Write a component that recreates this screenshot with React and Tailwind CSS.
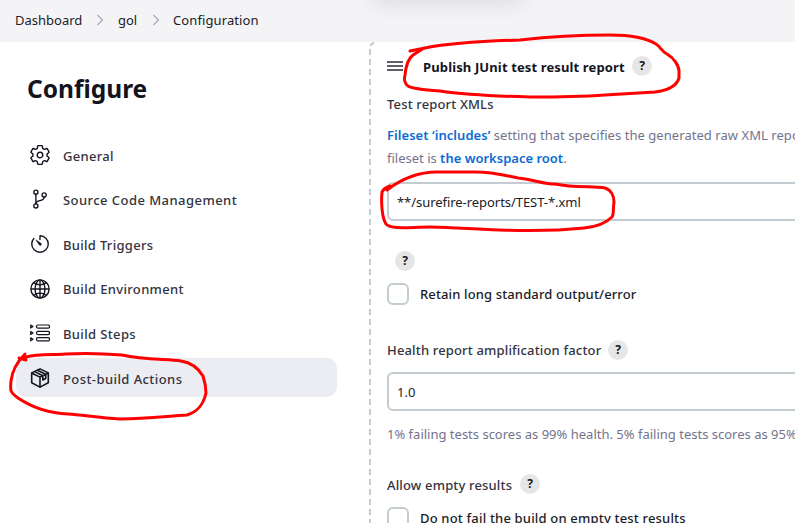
import React from 'react';
import { IoSettingsOutline, IoGitBranchOutline, IoTimerOutline, IoGlobeOutline } from 'react-icons/io5';

const iconProps = {
  viewBox: '0 0 20 20',
  fill: 'none',
  stroke: 'currentColor',
  strokeLinecap: 'round',
  strokeLinejoin: 'round',
};

function Steps({ className }) {
  return (
    <svg {...iconProps} className={className} strokeWidth="1.200">
      {[3.6, 10, 16.3].map((y) => (
        <g key={y}>
          <path d={`M.7 ${y - 1.5}v3l2.300-1.500z`} />
          <rect x="6.500" y={y - 1.6} width="13" height="3.200" rx="1.500" />
        </g>
      ))}
    </svg>
  );
}

function Package({ className }) {
  return (
    <svg {...iconProps} className={className} strokeWidth="1.600">
      <path d="M10 .9l8.300 4v9.900L10 19.100l-8.300-4.300V4.900z" />
      <path d="M1.900 5.200L10 9.100l8.100-3.900M10 9.100v9.800M4.700 3.600l8.100 4.100v4.300l2.900-1.500V6.300L7.400 2.300" />
    </svg>
  );
}

const sections = [
  { label: 'General', Icon: IoSettingsOutline, size: 'scale-[1.12]', track: 'tracking-[0.28px]' },
  { label: 'Source Code Management', Icon: IoGitBranchOutline, size: 'scale-[1.1]', track: 'tracking-[0.45px]' },
  { label: 'Build Triggers', Icon: IoTimerOutline, size: 'scale-[1.1]', track: 'tracking-[0.3px]' },
  { label: 'Build Environment', Icon: IoGlobeOutline, size: 'scale-[1.12]', track: 'tracking-[0.34px]' },
  { label: 'Build Steps', Icon: Steps, size: '', track: 'tracking-[0.36px]' },
  { label: 'Post-build Actions', Icon: Package, size: '', track: 'tracking-[0.42px]', active: true },
];

function Chevron() {
  return (
    <svg viewBox="0 0 8 12" className="h-3 w-2 shrink-0 -translate-y-px" fill="none" stroke="#a9a8bf" strokeWidth="1.300">
      <path d="M1.500 1l5 5-5 5" />
    </svg>
  );
}

function Help() {
  return (
    <span className="flex h-5 w-5 shrink-0 items-center justify-center rounded-full bg-[#e6e6e6] text-[12px] leading-none font-bold text-[#14141f]">
      ?
    </span>
  );
}

function Checkbox() {
  return <span className="h-[22px] w-[22px] shrink-0 rounded-md border-2 border-[#c3ccd1] bg-white" />;
}

function Annotations() {
  return (
    <svg className="pointer-events-none absolute inset-0 h-[523px] w-[795px]" viewBox="0 0 795 523" fill="none" stroke="#ff0000" strokeWidth="3" strokeLinecap="round" strokeLinejoin="round">
      <path d="M410 51L425 48C445 44 485 41 520 40C555 36 585 35 610 35C632 35 648 39 656 44C661 47 661 51 667 54C674 58 679 66 679 71V78C677 85 671 90 655 92L605 95C575 97 550 97 530 97C490 96 460 94 440 91C425 90 412 89 408 86C404 83 404 79 405 75C406 65 409 58 413 55L424 48" />
      <path d="M387 190C400 180 418 172 437 172H475C495 172 507 176 518 178C535 180 544 184 555 184C575 188 593 186 605 188C611 190 614 196 614 202C613 208 614 214 612 217C605 224 595 227 584 228C565 230 530 231 500 230C470 229 445 227 430 227C410 227 392 230 386 224C382 218 381 203 382 192Q384 188 390 186" />
      <path d="M22 359L26 357C38 354 54 355 65 354C84 353 110 354 122 355C145 360 167 359 181 361C194 363 200 371 203 376C205 382 206 386 206 393C203 406 197 412 187 415C168 416 148 419 120 419C100 418 83 415 68 414C42 413 27 404 18 398C10 392 10 391 11 381C12 372 16 363 25 354M19 358L26 360" />
    </svg>
  );
}

export default function App() {
  return (
    <div className="relative flex h-[523px] w-[795px] flex-col overflow-hidden bg-white font-['Noto_Sans','Open_Sans',sans-serif] text-[13px] text-[#1c1c28]">
      <header className="relative flex h-[42px] shrink-0 items-center overflow-hidden bg-[#f4f4f7] pb-px pl-[15px] text-[13px]">
        <span className="w-[68px] whitespace-nowrap">Dashboard</span>
        <span className="ml-[13px]"><Chevron /></span>
        <span className="ml-[14px] w-5">gol</span>
        <span className="ml-[14px]"><Chevron /></span>
        <span className="ml-[13px] tracking-[0.1px]">Configuration</span>
        <span className="absolute -top-5 left-[370px] h-5 w-[155px] rounded-xl shadow-[0_2px_22px_rgba(20,20,31,0.12)]" />
      </header>

      <div className="flex min-h-0 flex-1">
        <aside className="w-[369px] shrink-0 pl-4">
          <h1 className="mt-[29px] ml-[11px] h-9 text-[24.500px] leading-9 font-bold text-[#14141f]">Configure</h1>
          <nav className="mt-[28.300px] flex flex-col gap-[5.600px]">
            {sections.map(({ label, Icon, size, track, active }) => (
              <div
                key={label}
                className={`flex h-[39px] w-[321px] items-center gap-[13px] rounded-[10px] pl-[14px] ${active ? 'bg-[#ecedf2]' : ''}`}
              >
                <Icon className={`h-5 w-5 shrink-0 text-[#14141f] ${size}`} />
                <span className={`pt-[3px] font-medium whitespace-nowrap text-[#333340] ${track}`}>{label}</span>
              </div>
            ))}
          </nav>
        </aside>

        <main className="relative w-[426px] shrink-0 pl-[18px] whitespace-nowrap">
          <svg className="absolute top-0 left-0 h-[481px] w-4" viewBox="0 0 16 481" fill="none" stroke="#c3ccd1" strokeWidth="2">
            <path d="M1 7V481" strokeDasharray="6 4" />
            <path d="M1.500 4Q2 1.500 5 .7" />
          </svg>
          <div className="mt-[14px] flex h-5 items-center">
            <svg className="h-[10px] w-4" viewBox="0 0 16 10" stroke="#2b2b38" strokeWidth="1.400">
              <path d="M0 1h16M0 5h16M0 9h16" />
            </svg>
            <span className="ml-5 w-[209px] pt-[3px] font-bold tracking-[0.13px] text-[#14141f]">Publish JUnit test result report</span>
            <Help />
          </div>
          <div className="mt-[18px] h-5 leading-5 font-medium tracking-[0.15px] text-[#333340]">Test report XMLs</div>
          <div className="mt-[10px] leading-[23px] text-[#73738c]">
            <div className="tracking-[0.05px]"><b className="font-semibold text-[#0b6bd3]">Fileset ‘includes’</b> setting that specifies the generated raw XML report files</div>
            <div>fileset is <b className="font-semibold text-[#0b6bd3]">the workspace root</b>.</div>
          </div>
          <div className="mt-[12px] flex h-[39px] w-[500px] items-center rounded-md border-2 border-[#c3ccd1] px-2 pt-[2px] tracking-[-0.05px]">
            **/surefire-reports/TEST-*.xml
          </div>
          <div className="mt-[30px] ml-2"><Help /></div>
          <div className="mt-[12px] flex h-[22px] items-center gap-[11px] font-medium">
            <Checkbox />
            <span className="pt-[2px] tracking-[0.13px]">Retain long standard output/error</span>
          </div>
          <div className="mt-[35px] flex h-5 items-center">
            <span className="w-[221px] pt-[2px] font-medium tracking-[0.16px] text-[#333340]">Health report amplification factor</span>
            <Help />
          </div>
          <div className="mt-[12px] flex h-[39px] w-[500px] items-center rounded-md border-2 border-[#c3ccd1] px-2 pt-[2px]">1.0</div>
          <div className="mt-[13px] h-5 leading-5 text-[#73738c]">1% failing tests scores as 99% health. 5% failing tests scores as 95% health</div>
          <div className="mt-[30px] flex h-5 items-center">
            <span className="w-[133px] pt-[3px] font-medium tracking-[0.16px] text-[#333340]">Allow empty results</span>
            <Help />
          </div>
          <div className="mt-[13px] flex h-[22px] items-center gap-[11px] font-medium">
            <Checkbox />
            <span className="pt-[2px] tracking-[0.18px]">Do not fail the build on empty test results</span>
          </div>
        </main>
      </div>
      <Annotations />
    </div>
  );
}
